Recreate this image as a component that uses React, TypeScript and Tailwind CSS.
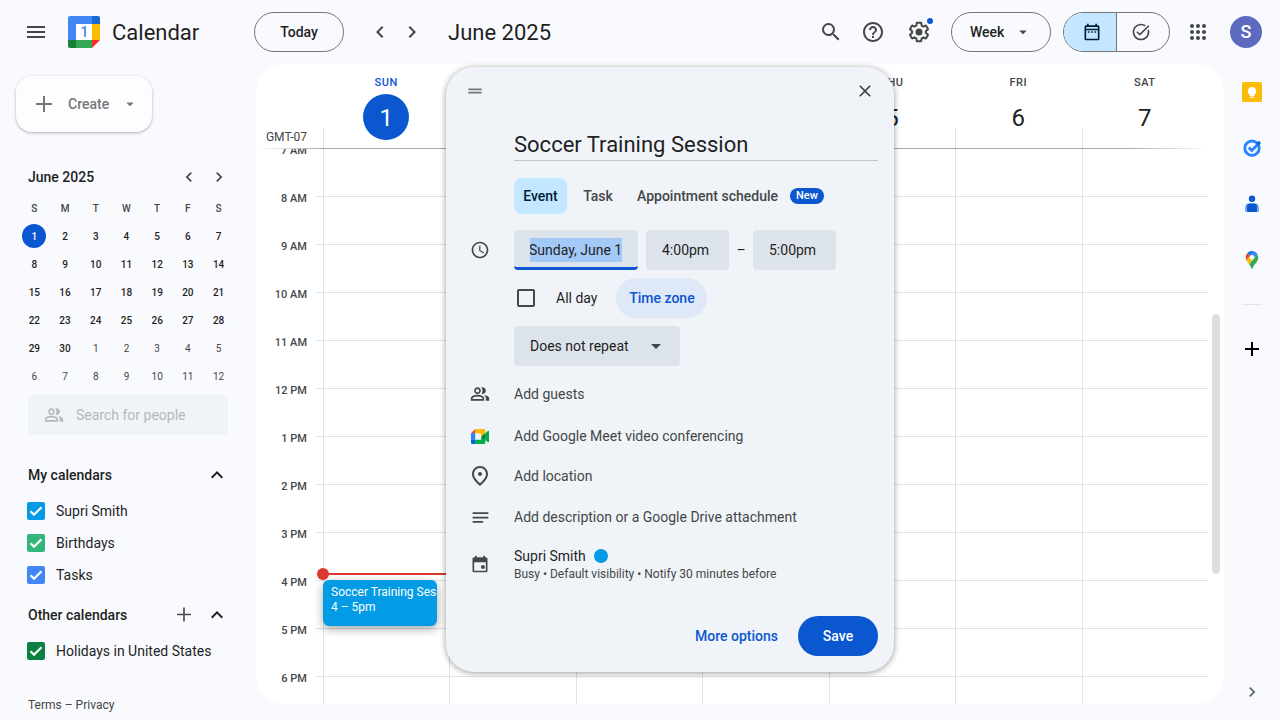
import { useEffect, useRef, type ReactNode } from "react";
import {
  MdAccessTime,
  MdAdd,
  MdArrowDropDown,
  MdChevronLeft,
  MdChevronRight,
  MdClose,
  MdDragHandle,
  MdExpandLess,
  MdHelpOutline,
  MdMenu,
  MdNotes,
  MdOutlineDateRange,
  MdOutlinePlace,
  MdSearch,
  MdTaskAlt,
} from "react-icons/md";

const DAYS = [
  { name: "SUN", date: 1 },
  { name: "MON", date: 2 },
  { name: "TUE", date: 3 },
  { name: "WED", date: 4 },
  { name: "THU", date: 5 },
  { name: "FRI", date: 6 },
  { name: "SAT", date: 7 },
];

const HOURS = ["7 AM", "8 AM", "9 AM", "10 AM", "11 AM", "12 PM", "1 PM", "2 PM", "3 PM", "4 PM", "5 PM", "6 PM"];

const MINI_WEEKS = [
  [1, 2, 3, 4, 5, 6, 7],
  [8, 9, 10, 11, 12, 13, 14],
  [15, 16, 17, 18, 19, 20, 21],
  [22, 23, 24, 25, 26, 27, 28],
  [29, 30, 1, 2, 3, 4, 5],
  [6, 7, 8, 9, 10, 11, 12],
];

function GearIcon() {
  return (
    <svg viewBox="0 0 24 24" className="size-6" fill="currentColor" aria-hidden="true">
      <path d="M13.85 22.25h-3.7c-.74 0-1.36-.54-1.45-1.27l-.27-1.89c-.27-.14-.53-.29-.79-.46l-1.8.72c-.7.26-1.47-.03-1.81-.65L2.2 15.53c-.35-.66-.2-1.44.36-1.88l1.53-1.19c-.01-.15-.02-.3-.02-.46 0-.15.01-.31.02-.46l-1.52-1.19c-.59-.45-.74-1.26-.37-1.88l1.85-3.19c.34-.62 1.11-.9 1.79-.63l1.81.73c.26-.17.52-.32.78-.46l.27-1.91c.09-.7.71-1.25 1.44-1.25h3.7c.74 0 1.36.54 1.45 1.27l.27 1.89c.27.14.53.29.79.46l1.8-.72c.71-.26 1.48.03 1.82.65l1.84 3.18c.36.66.2 1.44-.36 1.88l-1.52 1.19c.01.15.02.3.02.46s-.01.31-.02.46l1.52 1.19c.56.45.72 1.23.37 1.86l-1.86 3.22c-.34.62-1.11.9-1.8.63l-1.8-.72c-.26.17-.52.32-.78.46l-.27 1.91c-.1.68-.72 1.22-1.46 1.22zm-3.23-2h2.76l.37-2.55.53-.22c.44-.18.88-.44 1.34-.78l.45-.34 2.38.96 1.38-2.4-2.03-1.58.07-.56c.03-.26.06-.51.06-.78s-.03-.53-.06-.78l-.07-.56 2.03-1.58-1.39-2.4-2.39.96-.45-.35c-.42-.32-.87-.58-1.33-.77l-.52-.22-.37-2.55h-2.76l-.37 2.55-.53.21c-.44.19-.88.44-1.34.79l-.45.33-2.38-.95-1.39 2.39 2.03 1.58-.07.56a7 7 0 0 0-.06.79c0 .26.02.53.06.78l.07.56-2.03 1.58 1.38 2.4 2.39-.96.45.35c.43.33.86.58 1.33.77l.53.22.38 2.55z" />
      <circle cx="12" cy="12" r="3.5" />
    </svg>
  );
}

function AppsIcon() {
  const stops = [6, 12, 18];
  return (
    <svg viewBox="0 0 24 24" className="size-6" fill="currentColor" aria-hidden="true">
      {stops.map((y) => stops.map((x) => <circle key={`${x}-${y}`} cx={x} cy={y} r="2" />))}
    </svg>
  );
}

function PeopleIcon() {
  return (
    <svg viewBox="0 0 24 24" className="size-5 shrink-0" fill="currentColor" aria-hidden="true">
      <path d="M15 8c0-1.42-.5-2.73-1.33-3.76.42-.14.86-.24 1.33-.24 2.21 0 4 1.79 4 4s-1.79 4-4 4c-.43 0-.84-.09-1.23-.21-.03-.01-.06-.02-.1-.03A5.98 5.98 0 0 0 15 8zm1.66 5.13C18.03 14.06 19 15.32 19 17v3h4v-3c0-2.18-3.58-3.47-6.34-3.87zM9 6c-1.1 0-2 .9-2 2s.9 2 2 2 2-.9 2-2-.9-2-2-2m0 9c-2.7 0-5.8 1.29-6 2.01V18h12v-1c-.2-.71-3.3-2-6-2M9 4c2.21 0 4 1.79 4 4s-1.79 4-4 4-4-1.79-4-4 1.79-4 4-4zm0 9c2.67 0 8 1.34 8 4v3H1v-3c0-2.66 5.33-4 8-4z" />
    </svg>
  );
}

function EventIcon() {
  return (
    <svg viewBox="0 0 24 24" className="size-5" fill="currentColor" aria-hidden="true">
      <path d="M19 4h-1V2h-2v2H8V2H6v2H5c-1.11 0-2 .9-2 2v14c0 1.1.89 2 2 2h14c1.1 0 2-.9 2-2V6c0-1.1-.9-2-2-2zm0 16H5V10h14v10z" />
      <circle cx="15.5" cy="15.5" r="2.4" />
    </svg>
  );
}

function CalendarLogo() {
  return (
    <svg viewBox="0 0 32 32" className="size-8" aria-hidden="true">
      <path d="M2 0h22v8H8v16H0V2a2 2 0 0 1 2-2z" fill="#4285f4" />
      <path d="M24 0h6a2 2 0 0 1 2 2v6h-8z" fill="#1967d2" />
      <path d="M24 8h8v16h-8z" fill="#fbbc04" />
      <path d="M8 24h16v8H8z" fill="#34a853" />
      <path d="M0 24h8v8H2a2 2 0 0 1-2-2z" fill="#188038" />
      <path d="M24 24h8l-8 8z" fill="#fc2a25" />
      <path d="M8 8h16v16H8z" fill="#fff" />
      <text x="16.5" y="21" textAnchor="middle" fontSize="14" fontWeight="500" fill="#4285f4">
        1
      </text>
    </svg>
  );
}

function MeetLogo() {
  return (
    <svg viewBox="0 0 87.5 72" className="h-[15px] w-[18px]" aria-hidden="true">
      <path fill="#00832d" d="M49.5 36l8.53 9.75 11.47 7.33 2-17.02-2-16.64-11.69 6.44z" />
      <path fill="#0066da" d="M0 51.5V66c0 3.315 2.685 6 6 6h14.5l3-10.96-3-9.54-9.95-3z" />
      <path fill="#e94235" d="M20.5 0L0 20.5l10.55 3 9.95-3 2.95-9.41z" />
      <path fill="#2684fc" d="M20.5 20.5H0v31h20.5z" />
      <path
        fill="#00ac47"
        d="M82.6 8.68L69.5 19.42v33.66l13.16 10.79c1.97 1.54 4.85.135 4.85-2.37V11c0-2.535-2.945-3.925-4.91-2.32zM49.5 36v15.5h-29V72h43c3.315 0 6-2.685 6-6V53.08z"
      />
      <path fill="#ffba00" d="M63.5 0h-43v20.5h29V36l20-16.57V6c0-3.315-2.685-6-6-6z" />
    </svg>
  );
}

function KeepLogo() {
  return (
    <svg viewBox="0 0 20 20" className="size-5" aria-hidden="true">
      <rect width="20" height="20" rx="1.5" fill="#fbbc04" />
      <path d="M10 5a4.2 4.2 0 0 0-2.3 7.7V14h4.6v-1.3A4.2 4.2 0 0 0 10 5z" fill="#fff" />
      <path d="M8 14.6h4v1.2H8z" fill="#fff" />
    </svg>
  );
}

function TasksLogo() {
  return (
    <svg viewBox="0 0 20 20" className="size-5" aria-hidden="true">
      <circle cx="10" cy="10.2" r="7.2" fill="none" stroke="#2684fc" strokeWidth="2.8" />
      <path d="M6.8 9.6l3 3 6.6-6.8" fill="none" stroke="#2684fc" strokeWidth="2.8" />
      <path d="M14.2 5.6l2.6-2.8 2.2 2.2-2.8 2.6z" fill="#0066da" />
    </svg>
  );
}

function ContactsLogo() {
  return (
    <svg viewBox="0 0 20 20" className="size-5" aria-hidden="true">
      <circle cx="10" cy="4.8" r="3.2" fill="#0b57d0" />
      <path d="M7 9.5h6a4 4 0 0 1 4 4v3a1.5 1.5 0 0 1-1.5 1.5h-11A1.5 1.5 0 0 1 3 16.5v-3a4 4 0 0 1 4-4z" fill="#7baaf7" />
      <path d="M8 9.5h4a3 3 0 0 1 3 3V18H6.5A1.5 1.5 0 0 1 5 16.5v-4a3 3 0 0 1 3-3z" fill="#0b57d0" />
    </svg>
  );
}

function MapsLogo() {
  return (
    <svg viewBox="0 0 92.3 132.3" className="h-[18px] w-5" aria-hidden="true">
      <path fill="#1a73e8" d="M60.2 2.2C55.8.8 51 0 46.1 0 32 0 19.3 6.4 10.8 16.5l21.8 18.3L60.2 2.2z" />
      <path fill="#ea4335" d="M10.8 16.5C4.1 24.5 0 34.9 0 46.1c0 8.7 1.7 15.7 4.6 22l28-33.3-21.8-18.3z" />
      <path fill="#4285f4" d="M46.2 28.5c9.8 0 17.7 7.9 17.7 17.7 0 4.3-1.6 8.3-4.2 11.4 0 0 13.9-16.6 27.5-32.7-5.6-10.8-15.3-19-27-22.7L32.6 34.8c3.3-3.8 8.1-6.3 13.6-6.3" />
      <path fill="#fbbc04" d="M46.2 63.8c-9.8 0-17.7-7.9-17.7-17.7 0-4.3 1.5-8.3 4.1-11.3l-28 33.3c4.8 10.6 12.8 19.2 21 29.9l34.1-40.5c-3.3 3.9-8.1 6.3-13.5 6.3" />
      <path fill="#34a853" d="M59.1 109.2c15.4-24.1 33.3-35 33.3-63 0-7.7-1.9-14.9-5.2-21.3L25.6 98c2.6 3.4 5.3 7.3 7.9 11.3 9.4 14.5 6.8 23.1 12.8 23.1s3.4-8.7 12.8-23.2" />
    </svg>
  );
}

function IconButton({ label, children, className = "size-10" }: { label: string; children: ReactNode; className?: string }) {
  return (
    <button type="button" aria-label={label} className={`flex shrink-0 items-center justify-center rounded-full ${className}`}>
      {children}
    </button>
  );
}

function Header() {
  return (
    <header className="flex h-16 shrink-0 items-center pr-[18px] text-[#444746]">
      <div className="flex w-[254px] shrink-0 items-center pl-3">
        <IconButton label="Main menu" className="size-12">
          <MdMenu size={24} />
        </IconButton>
        <a href="#home" className="ml-2 flex items-center gap-3 text-[22px] text-[#1f1f1f]">
          <CalendarLogo />
          Calendar
        </a>
      </div>
      <button type="button" className="h-10 w-[90px] shrink-0 rounded-full border border-[#747775] text-sm font-medium text-[#1f1f1f]">
        Today
      </button>
      <div className="ml-5 flex shrink-0">
        <IconButton label="Previous week" className="size-8">
          <MdChevronLeft size={24} />
        </IconButton>
        <IconButton label="Next week" className="size-8">
          <MdChevronRight size={24} />
        </IconButton>
      </div>
      <h1 className="ml-5 text-[22px] whitespace-nowrap text-[#1f1f1f]">June 2025</h1>

      <div className="ml-auto flex items-center">
        <IconButton label="Search">
          <MdSearch size={24} />
        </IconButton>
        <IconButton label="Support" className="ml-0.5 size-10">
          <MdHelpOutline size={24} />
        </IconButton>
        <div className="relative ml-1.5">
          <IconButton label="Settings menu">
            <GearIcon />
          </IconButton>
          <span className="absolute top-1.5 right-1.5 size-1.5 rounded-full bg-[#0b57d0]" />
        </div>
        <div className="relative ml-3">
          <select aria-label="View" className="h-10 w-[100px] appearance-none rounded-full border border-[#747775] bg-transparent pl-[18px] text-sm font-medium text-[#1f1f1f]">
            <option>Week</option>
          </select>
          <MdArrowDropDown size={18} className="pointer-events-none absolute top-[11px] right-[19px]" />
        </div>
        <div className="ml-3 flex h-10 w-[107px] overflow-hidden rounded-full border border-[#747775]">
          <button type="button" aria-label="Calendar" aria-pressed="true" className="flex flex-1 items-center justify-center border-r border-[#747775] bg-[#c2e7ff] pl-1 text-[#001d35]">
            <MdOutlineDateRange size={20} />
          </button>
          <button type="button" aria-label="Tasks" aria-pressed="false" className="flex flex-1 items-center justify-center pr-1">
            <MdTaskAlt size={20} />
          </button>
        </div>
        <IconButton label="Google apps" className="ml-2 size-10">
          <AppsIcon />
        </IconButton>
        <button type="button" aria-label="Account" className="ml-3 size-8 rounded-full bg-[#5c6bc0] text-lg leading-8 font-medium text-white">
          S
        </button>
      </div>
    </header>
  );
}

function MiniMonth() {
  return (
    <section className="mt-7 pr-[22px] pl-[19px]">
      <div className="flex h-[34px] items-center">
        <h2 className="ml-[9px] flex-1 text-sm font-medium">June 2025</h2>
        <IconButton label="Previous month" className="size-[30px]">
          <MdChevronLeft size={20} className="text-[#444746]" />
        </IconButton>
        <IconButton label="Next month" className="size-[30px]">
          <MdChevronRight size={20} className="text-[#444746]" />
        </IconButton>
      </div>
      <table className="w-full table-fixed text-center text-[10px]">
        <thead>
          <tr className="h-7 text-[#444746]">
            {["S", "M", "T", "W", "T", "F", "S"].map((day, i) => (
              <th key={i} className="p-0 font-medium">
                {day}
              </th>
            ))}
          </tr>
        </thead>
        <tbody>
          {MINI_WEEKS.map((week, row) => (
            <tr key={row} className="h-7">
              {week.map((date, col) => {
                const today = row === 0 && col === 0;
                const nextMonth = row > 3 && date < 15;
                return (
                  <td key={col} className="p-0">
                    <button
                      type="button"
                      className={
                        today
                          ? "size-6 rounded-full bg-[#0b57d0] align-middle font-medium text-white"
                          : nextMonth
                            ? "size-6 align-middle text-[#444746]"
                            : "size-6 align-middle font-medium"
                      }
                    >
                      {date}
                    </button>
                  </td>
                );
              })}
            </tr>
          ))}
        </tbody>
      </table>
    </section>
  );
}

function CalendarCheck({ label, color }: { label: string; color: string }) {
  return (
    <label className="flex h-8 items-center pl-[27px] text-sm">
      <span className="relative flex size-[18px] shrink-0">
        <input type="checkbox" defaultChecked className={`size-[18px] appearance-none rounded-xs ${color}`} />
        <svg viewBox="0 0 18 18" className="pointer-events-none absolute inset-0" fill="none" stroke="#fff" strokeWidth="2.2" aria-hidden="true">
          <path d="M3.5 9.3l3.5 3.5 7.5-7.5" />
        </svg>
      </span>
      <span className="ml-[11px]">{label}</span>
    </label>
  );
}

function Sidebar() {
  return (
    <aside className="flex w-64 shrink-0 flex-col overflow-hidden pt-3 text-[#1f1f1f]">
      <button
        type="button"
        className="ml-4 flex h-14 w-[136px] shrink-0 items-center rounded-2xl bg-[#fdfdff] pl-4 text-sm font-medium text-[#757775] shadow-[0_1px_3px_rgba(0,0,0,0.3)]"
      >
        <svg viewBox="0 0 24 24" className="size-6" stroke="currentColor" strokeWidth="2" aria-hidden="true">
          <path d="M4 12h16M12 4v16" />
        </svg>
        <span className="ml-3">Create</span>
        <MdArrowDropDown size={18} className="mr-[13px] ml-auto" />
      </button>

      <MiniMonth />

      <label className="mt-[5px] mr-7 ml-7 flex h-10 shrink-0 items-center gap-3 rounded bg-[#f0f4f9] px-4 text-[#b5b8bb]">
        <PeopleIcon />
        <input type="text" placeholder="Search for people" aria-label="Search for people" className="w-full min-w-0 bg-transparent text-sm placeholder:text-[#b5b8bb]" />
      </label>

      <section className="mt-5">
        <div className="flex h-10 items-center pr-[27px] pl-7">
          <h2 className="flex-1 text-sm font-medium">My calendars</h2>
          <IconButton label="Collapse my calendars" className="size-6">
            <MdExpandLess size={24} />
          </IconButton>
        </div>
        <CalendarCheck label="Supri Smith" color="bg-[#039be5]" />
        <CalendarCheck label="Birthdays" color="bg-[#33b679]" />
        <CalendarCheck label="Tasks" color="bg-[#4285f4]" />
      </section>

      <section className="mt-1">
        <div className="flex h-10 items-center pr-[27px] pl-7">
          <h2 className="flex-1 text-sm font-medium">Other calendars</h2>
          <IconButton label="Add other calendars" className="mr-[9px] size-6">
            <svg viewBox="0 0 24 24" className="size-6" stroke="#444746" strokeWidth="1.6" aria-hidden="true">
              <path d="M5 11.5h14M12 4.5v14" />
            </svg>
          </IconButton>
          <IconButton label="Collapse other calendars" className="size-6">
            <MdExpandLess size={24} />
          </IconButton>
        </div>
        <CalendarCheck label="Holidays in United States" color="bg-[#0b8043]" />
      </section>

      <p className="mt-7 flex h-5 items-center gap-[3px] pl-7 text-xs text-[#444746]">
        <a href="#terms">Terms</a>
        <span>–</span>
        <a href="#privacy">Privacy</a>
      </p>
    </aside>
  );
}

function WeekView() {
  return (
    <main className="mb-4 flex min-w-0 flex-1 flex-col overflow-hidden rounded-[28px] bg-white">
      <div className="flex h-[84px] shrink-0 pr-4">
        <div className="flex w-[67px] shrink-0 items-end justify-end pr-4 pb-[3px] text-xs text-[#444746]">GMT-07</div>
        {DAYS.map(({ name, date }) => {
          const today = date === 1;
          return (
            <div key={name} className="relative flex min-w-0 flex-1 flex-col items-center pt-[11px]">
              <span className={`text-[11px] leading-4 font-medium tracking-wider ${today ? "text-[#0b57d0]" : "text-[#444746]"}`}>{name}</span>
              <button
                type="button"
                className={`mt-[3px] size-[46px] rounded-full pt-0.5 text-2xl ${today ? "bg-[#0b57d0] text-white" : "text-[#1f1f1f]"}`}
              >
                {date}
              </button>
              <span className="absolute bottom-0 left-0 h-5 w-px bg-[#dde3ea]" />
            </div>
          );
        })}
      </div>
      <div className="mr-4 h-px shrink-0 bg-[linear-gradient(to_right,transparent,#a8abb3_65px,#a8abb3_calc(100%_-_80px),transparent)]" />

      <div className="flex min-h-0 flex-1 overflow-hidden">
        <div className="-mt-[22px] w-[59px] shrink-0 pr-2 text-right text-[11px] font-medium text-[#444746]">
          {HOURS.map((hour) => (
            <div key={hour} className="flex h-12 items-center justify-end">
              {hour}
            </div>
          ))}
        </div>
        <div className="w-2 shrink-0">
          {HOURS.map((hour) => (
            <div key={hour} className="h-12 border-b border-[#dde3ea]" />
          ))}
        </div>
        {DAYS.map(({ name, date }) => (
          <div key={name} className="relative min-w-0 flex-1 border-l border-[#dde3ea]">
            {HOURS.map((hour) => (
              <div key={hour} className="h-12 border-b border-[#dde3ea]" />
            ))}
            {date === 1 && (
              <>
                <button
                  type="button"
                  className="absolute top-[431px] right-3 -left-px flex h-[46px] flex-col items-start overflow-hidden rounded-md bg-[#039be5] px-2 pt-1 text-xs whitespace-nowrap text-white shadow-[0_3px_10px_rgba(0,0,0,0.35)]"
                >
                  <span className="leading-4">Soccer Training Session</span>
                  <span className="leading-[14px]">4 – 5pm</span>
                </button>
                <div className="absolute top-[424px] right-0 left-0 h-0.5 bg-[#dc362e]" />
                <div className="absolute top-[419px] -left-[7px] size-3 rounded-full bg-[#dc362e]" />
              </>
            )}
          </div>
        ))}
        <div className="w-4 shrink-0 pt-[165px] pl-1">
          <div className="h-[260px] w-2 rounded-full bg-[#dfdfdf]" />
        </div>
      </div>
    </main>
  );
}

function AppRail() {
  return (
    <nav aria-label="Side panel" className="flex w-14 shrink-0 flex-col items-center">
      <IconButton label="Keep" className="size-14">
        <KeepLogo />
      </IconButton>
      <IconButton label="Tasks" className="size-14">
        <TasksLogo />
      </IconButton>
      <IconButton label="Contacts" className="size-14">
        <ContactsLogo />
      </IconButton>
      <IconButton label="Maps" className="size-14">
        <MapsLogo />
      </IconButton>
      <div className="my-4 h-px w-5 bg-[#e1e5ea]" />
      <IconButton label="Get add-ons" className="size-14">
        <MdAdd size={24} className="text-black" />
      </IconButton>
      <IconButton label="Hide side panel" className="mt-auto size-14">
        <MdChevronRight size={20} className="text-[#5f6368]" />
      </IconButton>
    </nav>
  );
}

function Row({ icon, children, className = "h-10" }: { icon?: ReactNode; children: ReactNode; className?: string }) {
  return (
    <div className={`flex items-center ${className}`}>
      <div className="flex w-[68px] shrink-0 justify-center text-[#444746]">{icon}</div>
      {children}
    </div>
  );
}

function EventDialog() {
  const dateRef = useRef<HTMLInputElement>(null);

  useEffect(() => {
    dateRef.current?.focus();
    dateRef.current?.select();
  }, []);

  return (
    <div
      role="dialog"
      aria-label="New event"
      className="absolute top-[67px] left-[446px] w-[448px] rounded-[28px] bg-[#f0f4f9] pb-4 text-sm text-[#1f1f1f] shadow-[0_1px_6px_rgba(0,0,0,0.4)]"
    >
      <div className="flex h-12 items-center justify-between pr-[9px] pl-[19px]">
        <MdDragHandle size={20} className="text-[#747775]" />
        <IconButton label="Close">
          <MdClose size={20} className="text-[#444746]" />
        </IconButton>
      </div>

      <div className="mt-[15px] mr-4 ml-[68px] border-b border-[#c4c7c5]">
        <input aria-label="Title" defaultValue="Soccer Training Session" className="block h-[30px] w-full bg-transparent text-[22px] outline-none" />
      </div>

      <div role="tablist" className="mt-[17px] ml-[68px] flex h-9 items-center font-medium text-[#444746]">
        <button type="button" role="tab" aria-selected="true" className="h-9 w-[53px] rounded-lg bg-[#c2e7ff] text-[#001d35]">
          Event
        </button>
        <button type="button" role="tab" aria-selected="false" className="ml-2 h-9 w-[46px]">
          Task
        </button>
        <button type="button" role="tab" aria-selected="false" className="ml-2 flex h-9 items-center gap-3 px-2">
          Appointment schedule
          <span className="flex h-4 items-center rounded-full bg-[#0b57d0] px-1.5 text-[11px] text-white">New</span>
        </button>
      </div>

      <Row icon={<MdAccessTime size={20} />} className="mt-4 h-10">
        <div className="flex h-10 w-[124px] items-center rounded border-b-3 border-[#0b57d0] bg-[#dde3ea] px-4 pt-[3px]">
          <input
            ref={dateRef}
            aria-label="Start date"
            defaultValue="Sunday, June 1"
            className="h-6 w-full outline-none selection:bg-[#a3c9f7] selection:text-[#1f1f1f] focus:bg-[#a3c9f7]"
          />
        </div>
        <input aria-label="Start time" defaultValue="4:00pm" className="ml-2 h-10 w-[83px] rounded bg-[#dde3ea] px-4" />
        <span className="w-6 text-center">–</span>
        <input aria-label="End time" defaultValue="5:00pm" className="h-10 w-[83px] rounded bg-[#dde3ea] px-4" />
      </Row>

      <Row className="mt-2 h-10">
        <label className="flex items-center">
          <input type="checkbox" className="ml-[3px] size-[18px] appearance-none rounded-xs border-2 border-[#444746]" />
          <span className="ml-[21px]">All day</span>
        </label>
        <button type="button" className="ml-[19px] h-10 w-[91px] rounded-full bg-[#dfe8f7] font-medium text-[#0b57d0]">
          Time zone
        </button>
      </Row>

      <Row className="mt-2 h-10">
        <div className="relative">
          <select aria-label="Repeat" className="h-10 w-[166px] appearance-none rounded bg-[#dde3ea] pl-4">
            <option>Does not repeat</option>
          </select>
          <MdArrowDropDown size={24} className="pointer-events-none absolute top-2 right-3 text-[#444746]" />
        </div>
      </Row>

      <Row icon={<PeopleIcon />} className="mt-2 h-10">
        <button type="button" className="text-[#444746]">Add guests</button>
      </Row>
      <Row icon={<MeetLogo />} className="mt-0.5 h-10">
        <button type="button" className="text-[#444746]">Add Google Meet video conferencing</button>
      </Row>
      <Row icon={<MdOutlinePlace size={24} />}>
        <button type="button" className="text-[#444746]">Add location</button>
      </Row>
      <Row icon={<MdNotes size={21} />} className="mt-px h-10">
        <button type="button" className="text-[#444746]">Add description or a Google Drive attachment</button>
      </Row>
      <Row icon={<EventIcon />} className="mt-[7px] h-10">
        <button type="button" className="text-left">
          <span className="flex h-5 items-center gap-2">
            Supri Smith
            <span className="size-3.5 rounded-full bg-[#039be5]" />
          </span>
          <span className="block text-xs leading-4 text-[#444746]">Busy • Default visibility • Notify 30 minutes before</span>
        </button>
      </Row>

      <div className="mt-8 flex justify-end gap-2 pr-4 font-medium">
        <button type="button" className="h-10 px-3 text-[#0b57d0]">
          More options
        </button>
        <button type="button" className="h-10 w-20 rounded-full bg-[#0b57d0] text-white">
          Save
        </button>
      </div>
    </div>
  );
}

export default function App() {
  return (
    <div className="relative flex h-screen flex-col overflow-hidden bg-[#f8fafd] font-[Roboto,'Liberation_Sans',sans-serif]">
      <Header />
      <div className="flex min-h-0 flex-1">
        <Sidebar />
        <WeekView />
        <AppRail />
      </div>
      <EventDialog />
    </div>
  );
}
